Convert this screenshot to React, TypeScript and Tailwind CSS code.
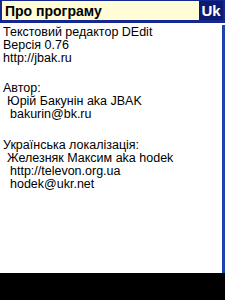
export default function App() {
  const font = { fontFamily: '"Liberation Sans", sans-serif' };
  return (
    <div className="w-[225px] h-[300px] flex flex-col bg-white overflow-hidden" style={font}>
      {/* Title bar */}
      <div className="h-[23px] flex items-stretch justify-between bg-[#fffcd6] border-x-2 border-t border-b-[3px] border-[#14288f]">
        <span className="pl-[3px] self-center text-[14px] font-bold text-black leading-none">Про програму</span>
        <span className="w-[24px] flex items-center justify-center bg-[#0c1a72] text-white text-[15px] font-bold leading-none">Uk</span>
      </div>

      {/* Content + scrollbar */}
      <div className="flex-1 flex">
        <div className="flex-1 pl-[3px] pt-[3px] text-[12.5px] leading-[13px] text-black">
          <div>Текстовий редактор DEdit</div>
          <div>Версія 0.76</div>
          <div>http://jbak.ru</div>
          <div className="h-[17px]" />
          <div>Автор:</div>
          <div className="pl-[4px]">Юрій Бакунін aka JBAK</div>
          <div className="pl-[7px]">bakurin@bk.ru</div>
          <div className="h-[18px]" />
          <div>Українська локалізація:</div>
          <div className="pl-[4px]">Железняк Максим aka hodek</div>
          <div className="pl-[7px]">http://televon.org.ua</div>
          <div className="pl-[7px]">hodek@ukr.net</div>
        </div>
        <div className="w-[3px] mt-[2px] bg-[#1a44b0]" />
      </div>

      {/* Softkey bar */}
      <div className="h-[27px] bg-black" />
    </div>
  );
}
